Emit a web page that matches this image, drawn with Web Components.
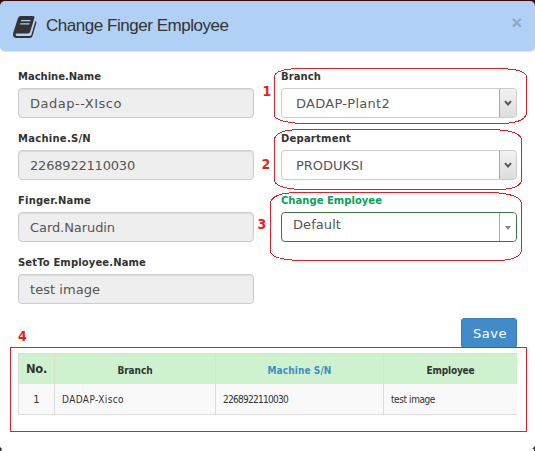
<!DOCTYPE html>
<html lang="en"><head><meta charset="utf-8"><title>Change Finger Employee</title>
<style>
html,body{margin:0;padding:0}
body{width:535px;height:451px;overflow:hidden;background:#fff;font-family:"DejaVu Sans",Verdana,sans-serif;color:#333}
</style></head><body>
<finger-dialog></finger-dialog>
<script>
const define=(name,html,init)=>customElements.define(name,class extends HTMLElement{
  connectedCallback(){
    if(this.shadowRoot)return;
    const t=document.createElement('template');
    t.innerHTML=html;
    this.attachShadow({mode:'open'}).append(t.content.cloneNode(true));
    if(init)init(this,this.shadowRoot);
  }
});

/* One line of text tracked to the width given in its "w" attribute. */
define('fit-text',`<style>:host{display:inline-block;white-space:pre}span{display:inline-block}</style><span><slot></slot></span>`,(el,root)=>{
  const w=parseFloat(el.getAttribute('w')),s=root.querySelector('span');
  const n=el.textContent.length,now=s.getBoundingClientRect().width;
  if(w&&n&&now)s.style.letterSpacing=((w-now)/n).toFixed(3)+'px';
});

define('dialog-header',`<style>
:host{display:flex;box-sizing:border-box;height:51px;background:#b1d0f5;border-bottom:1px solid #dbe6f3;border-radius:5px;align-items:flex-start;padding:0 13px 0 13px}
svg{display:block;margin-top:15px;flex:none}
.t{font:17px/24px "Liberation Sans",Arial,sans-serif;margin:13px 0 0 9px;flex:1}
.x{font:bold 18px/20px "Liberation Sans",Arial,sans-serif;color:#8ea7c4;margin-top:12px}
</style>
<svg width="24" height="22" viewBox="0 0 24 22"><path fill-rule="evenodd" d="M8 0H19.5Q22 0 21.4 2L17.2 15.8Q16.7 17.6 14.8 17.6H3.6Q2.4 17.6 2.6 18.7Q2.8 20 4 20H17Q18 20 18.4 18.8L22.4 5Q23.8 5.4 23.3 7L19.6 19.8Q18.9 22 17 22H3.5Q.4 22 0 19Q0 17.5.4 16.3L4.9 2.3Q5.5 0 8 0ZM8.4 3.9L8 5.2H17.2L17.6 3.9ZM7.4 7.3L7 8.6H16.2L16.6 7.3Z" fill="#333"/></svg>
<div class="t"><fit-text w="182.5">Change Finger Employee</fit-text></div><div class="x">×</div>`);

define('form-field',`<style>
:host{display:block;height:62px}
.l{box-sizing:border-box;padding-top:1px;font-weight:bold;font-size:10px;line-height:14px;height:19px;color:#333}
:host([tone=green]) .l{color:#00a65a}
.b{box-sizing:border-box;height:30px;border:1px solid #ccc;border-radius:4px;background:#fff;display:flex;align-items:stretch;color:#555;font-size:13px;line-height:30px;padding-left:14px;overflow:hidden}
:host([kind=input]) .b{background:#eee;padding-left:11px;box-shadow:inset 0 1px 1px rgba(0,0,0,.075)}
:host([tone=green]) .b{border-color:#3c763d;padding-left:11px;line-height:24px}
.v{flex:1;height:28px}
.a{box-sizing:border-box;width:18px;border:1px solid #aaa;margin:-1px -1px -1px 0;border-radius:0 3px 3px 0;background:linear-gradient(#f2f2f2,#ddd);display:flex;align-items:center;justify-content:center}
:host([kind=input]) .a{display:none}
:host([kind=combo]) .a{background:#fff;border-width:0 0 0 1px;margin:0;width:17px;padding-top:2px}
.chev{display:block}.tri{display:none}
:host([kind=combo]) .chev{display:none}:host([kind=combo]) .tri{display:block}
</style>
<div class="l"><slot name="label"></slot></div>
<div class="b"><div class="v"><slot></slot></div><div class="a">
<svg class="chev" width="8" height="7" viewBox="0 0 8 7"><path d="M1 1.2L4 4.5L7 1.2" fill="none" stroke="#555" stroke-width="2"/></svg>
<svg class="tri" width="6" height="4" viewBox="0 0 6 4"><path d="M0 0H6L3 4Z" fill="#888"/></svg></div></div>`);

define('save-button',`<style>:host{box-sizing:border-box;width:56px;height:30px;background:#428bca;border:1px solid #357ebd;border-radius:3px;color:#fff;font-size:13px;line-height:30px;display:block;padding-left:11px}</style><slot></slot>`);

define('employee-table',`<style>
:host{display:grid;grid-template-columns:36px 161px 168px 134px;grid-template-rows:30px 30px;box-sizing:border-box;height:62px;width:499px;border-top:1px solid #ddd;border-bottom:1px solid #ddd;font-size:9px}
div{box-sizing:border-box;border-left:1px solid #ddd;display:flex;align-items:center}
.h{background:#cef2ce;font-weight:bold;justify-content:center;padding-top:2px}
.c{background:#f9f9f9;padding:1px 0 0 7px}
.n{font-size:11.5px}.h.n{padding-top:0}.c.n{justify-content:center;padding-left:0;font-size:10px}
.k{color:#428bca}
.h:not(.n),.c:not(.n){font-family:"DejaVu Sans Condensed","DejaVu Sans",sans-serif;font-stretch:condensed;font-size:10px}
</style>
<div class="h n"><fit-text w="21">No.</fit-text></div><div class="h"><fit-text w="35">Branch</fit-text></div><div class="h k"><fit-text w="64">Machine S/N</fit-text></div><div class="h"><fit-text w="48">Employee</fit-text></div>
<div class="c n">1</div><div class="c"><fit-text w="62">DADAP-Xisco</fit-text></div><div class="c"><fit-text w="65">2268922110030</fit-text></div><div class="c"><fit-text w="44">test image</fit-text></div>`);

/* Red call-outs drawn over the form. */
define('mark-layer',`<style>
:host{position:absolute;inset:0;pointer-events:none;display:block}
svg{display:block}text{font:bold 14px "DejaVu Sans Condensed","DejaVu Sans",sans-serif;font-stretch:condensed;fill:#ed1c24}
</style><svg width="535" height="451" viewBox="0 0 535 451">
<g fill="none" stroke="#ed1c24" shape-rendering="crispEdges">
<path d="M274.5 77Q274.5 68.5 303 68.5H498Q526.5 69 526.5 77V112Q526.5 123.5 499 123.5H302Q274.5 122 274.5 115Z"/>
<path d="M274.5 140Q274.5 129.5 302 129.5H494Q521.5 131 521.5 140V179Q521.5 189.5 498 189.5H300Q274.5 188 274.5 180Z"/>
<path d="M270.5 204Q270.5 192.5 299 192.5H492Q521.5 194 521.5 204V249Q521.5 260.5 496 260.5H298Q270.5 259 270.5 251Z"/>
<path d="M10.5 347.5H526.5V431.5H10.5Z"/></g>
<text x="262.5" y="96">1</text><text x="261.5" y="169">2</text><text x="257.5" y="229">3</text><text x="18" y="341">4</text>
<path d="M0 447l2 2-1 2H0ZM535 446l-3 3h2v2h1Z" fill="#333"/>
</svg>`);

define('finger-dialog',`<style>
:host{display:flow-root;position:relative;width:535px;height:451px;background:linear-gradient(#40090b 0 8px,#fff 8px);overflow:hidden}
dialog-header{margin-top:1px}
.form{display:grid;grid-template-columns:236px 236px;column-gap:27px;padding:17px 18px 0}
.actions{display:flex;justify-content:flex-end;padding-right:18px;height:35px;margin-top:1px}
employee-table{margin-left:18px}
</style>
<dialog-header></dialog-header>
<div class="form">
<form-field kind="input"><fit-text slot="label" w="83">Machine.Name</fit-text><fit-text w="92">Dadap--XIsco</fit-text></form-field>
<form-field kind="select"><fit-text slot="label" w="40">Branch</fit-text><fit-text w="94">DADAP-Plant2</fit-text></form-field>
<form-field kind="input"><fit-text slot="label" w="73">Machine.S/N</fit-text><fit-text w="105">2268922110030</fit-text></form-field>
<form-field kind="select"><fit-text slot="label" w="70">Department</fit-text><fit-text w="67">PRODUKSI</fit-text></form-field>
<form-field kind="input"><fit-text slot="label" w="73">Finger.Name</fit-text><fit-text w="85">Card.Narudin</fit-text></form-field>
<form-field kind="combo" tone="green"><fit-text slot="label" w="101">Change Employee</fit-text><fit-text w="48">Default</fit-text></form-field>
<form-field kind="input"><fit-text slot="label" w="128">SetTo Employee.Name</fit-text><fit-text w="70">test image</fit-text></form-field>
</div>
<div class="actions"><save-button><fit-text w="34">Save</fit-text></save-button></div>
<employee-table></employee-table><mark-layer></mark-layer>`);
</script></body></html>
